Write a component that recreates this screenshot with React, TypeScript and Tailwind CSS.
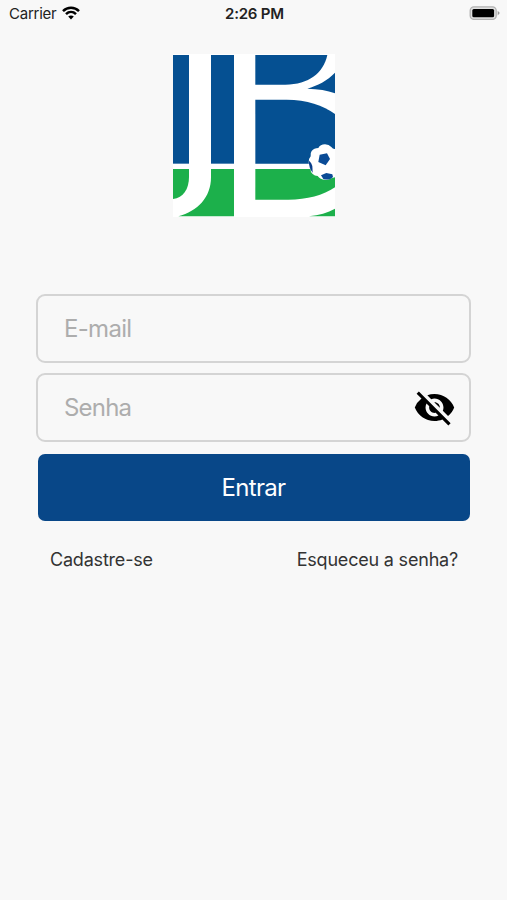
import { MdVisibilityOff } from "react-icons/md";

function Logo() {
  return (
    <svg className="block h-[163px] w-[162px]" viewBox="24 27 486 489" preserveAspectRatio="none" role="img" aria-label="JB">
      <rect x="24" y="27" width="486" height="489" fill="#fff" />
      <g fill="#055092">
        <rect x="24" y="30" width="48" height="326" />
        <rect x="138" y="30" width="69" height="326" />
        <path d="M271 30H487C476 83 431 119 361 119H271Z" />
        <path d="M510 83V145C487 136 460 132 427 131C457 122 487 107 510 83Z" />
        <path d="M271 164H365C425 164 475 181 510 207V356H271Z" />
      </g>
      <g fill="#1cb04b">
        <path d="M24 372H72V395C72 433 55 457 24 462Z" />
        <path d="M138 372H207V514H40C98 499 138 457 138 397Z" />
        <path d="M271 372H510V427C475 451 426 464 370 464H271Z" />
        <path d="M432 514C462 511 488 503 510 491V514Z" />
      </g>
      <path d="M510 312Q504 313 499 306Q492 298 480 298Q466 298 460 309Q447 309 440 318Q435 325 437 334Q430 342 431 352Q431 362 436 369Q436 381 443 387Q449 393 458 393Q465 404 481 405Q493 405 499 400L510 397Z" fill="#fff" />
      <path d="M431 346Q440 354 442 363L443 383Q432 372 431 346Z" fill="#0a3f8c" />
      <g fill="#0a4b96">
        <path d="M464 329L486 325L495 342L482 361L460 351Z" />
        <path d="M468 391L484 384L502 388L504 396C498 403 486 406 475 402Z" />
      </g>
    </svg>
  );
}

function StatusBar() {
  return (
    <header className="grid h-[27px] grid-cols-3 items-center pl-[9px] pr-[7px] text-[#222]">
      <div className="flex items-center gap-[6px]">
        <span className="text-[15px] leading-none tracking-[-0.25px]">Carrier</span>
        <svg className="-mt-0.5 h-[14px] w-[18px]" viewBox="0 0 18 14" fill="none" stroke="#000" strokeWidth="2.5">
          <path d="M1 5.1C5.5.7 12.5.7 17 5.1" />
          <path d="M4 8.2C6.9 5.4 11.1 5.4 14 8.2" />
          <path d="M6.2 10.6C7.8 9.1 10.2 9.1 11.8 10.6L9 13.6Z" fill="#000" stroke="none" />
        </svg>
      </div>
      <span className="text-center text-[15px] font-semibold leading-none tracking-[-0.2px]">2:26 PM</span>
      <svg className="-mt-px h-[14px] w-[31px] justify-self-end" viewBox="0 0 31 14">
        <rect x="1.2" y=".8" width="26" height="12.6" rx="3.7" fill="#e0e0e0" stroke="#b2b2b2" strokeWidth="1.3" />
        <rect x="3.3" y="2.9" width="21.8" height="8.4" rx="1.5" fill="#000" />
        <path d="M28.7 4.8L30.8 7.1L28.7 9.4Z" fill="#999" />
      </svg>
    </header>
  );
}

export default function App() {
  return (
    <main className="flex h-[900px] w-[507px] flex-col overflow-hidden bg-[#f8f8f8] font-['Inter','Liberation_Sans',sans-serif]">
      <StatusBar />
      <div className="mt-[27px] flex justify-center pl-px">
        <Logo />
      </div>
      <form className="mx-9 mt-[77px] flex flex-col" onSubmit={(e) => e.preventDefault()}>
        <input
          type="email"
          aria-label="E-mail"
          placeholder="E-mail"
          className="h-[69px] w-full rounded-[9px] border-2 border-[#d4d4d4] bg-[#f8f8f8] px-[26px] text-2xl tracking-[-0.7px] outline-none placeholder:text-[#adadad]"
        />
        <div className="mt-[10px] flex h-[69px] items-center rounded-[9px] border-2 border-[#d4d4d4] pl-[26px] pr-[13px]">
          <input
            type="password"
            aria-label="Senha"
            placeholder="Senha"
            className="mt-px min-w-0 flex-1 bg-transparent text-2xl tracking-[-0.8px] outline-none placeholder:text-[#adadad]"
          />
          <button type="button" aria-label="Mostrar senha">
            <MdVisibilityOff className="block h-[43px] w-[43px] text-black" />
          </button>
        </div>
        <button type="submit" className="mx-[1.5px] mt-[12px] h-[67px] rounded-[7px] bg-[#084788] text-2xl tracking-[-0.7px] text-white">
          Entrar
        </button>
        <div className="mt-[25px] flex justify-between pl-[14px] pr-[13px] text-lg tracking-[-0.2px] text-[#333]">
          <a>Cadastre-se</a>
          <a>Esqueceu a senha?</a>
        </div>
      </form>
    </main>
  );
}
